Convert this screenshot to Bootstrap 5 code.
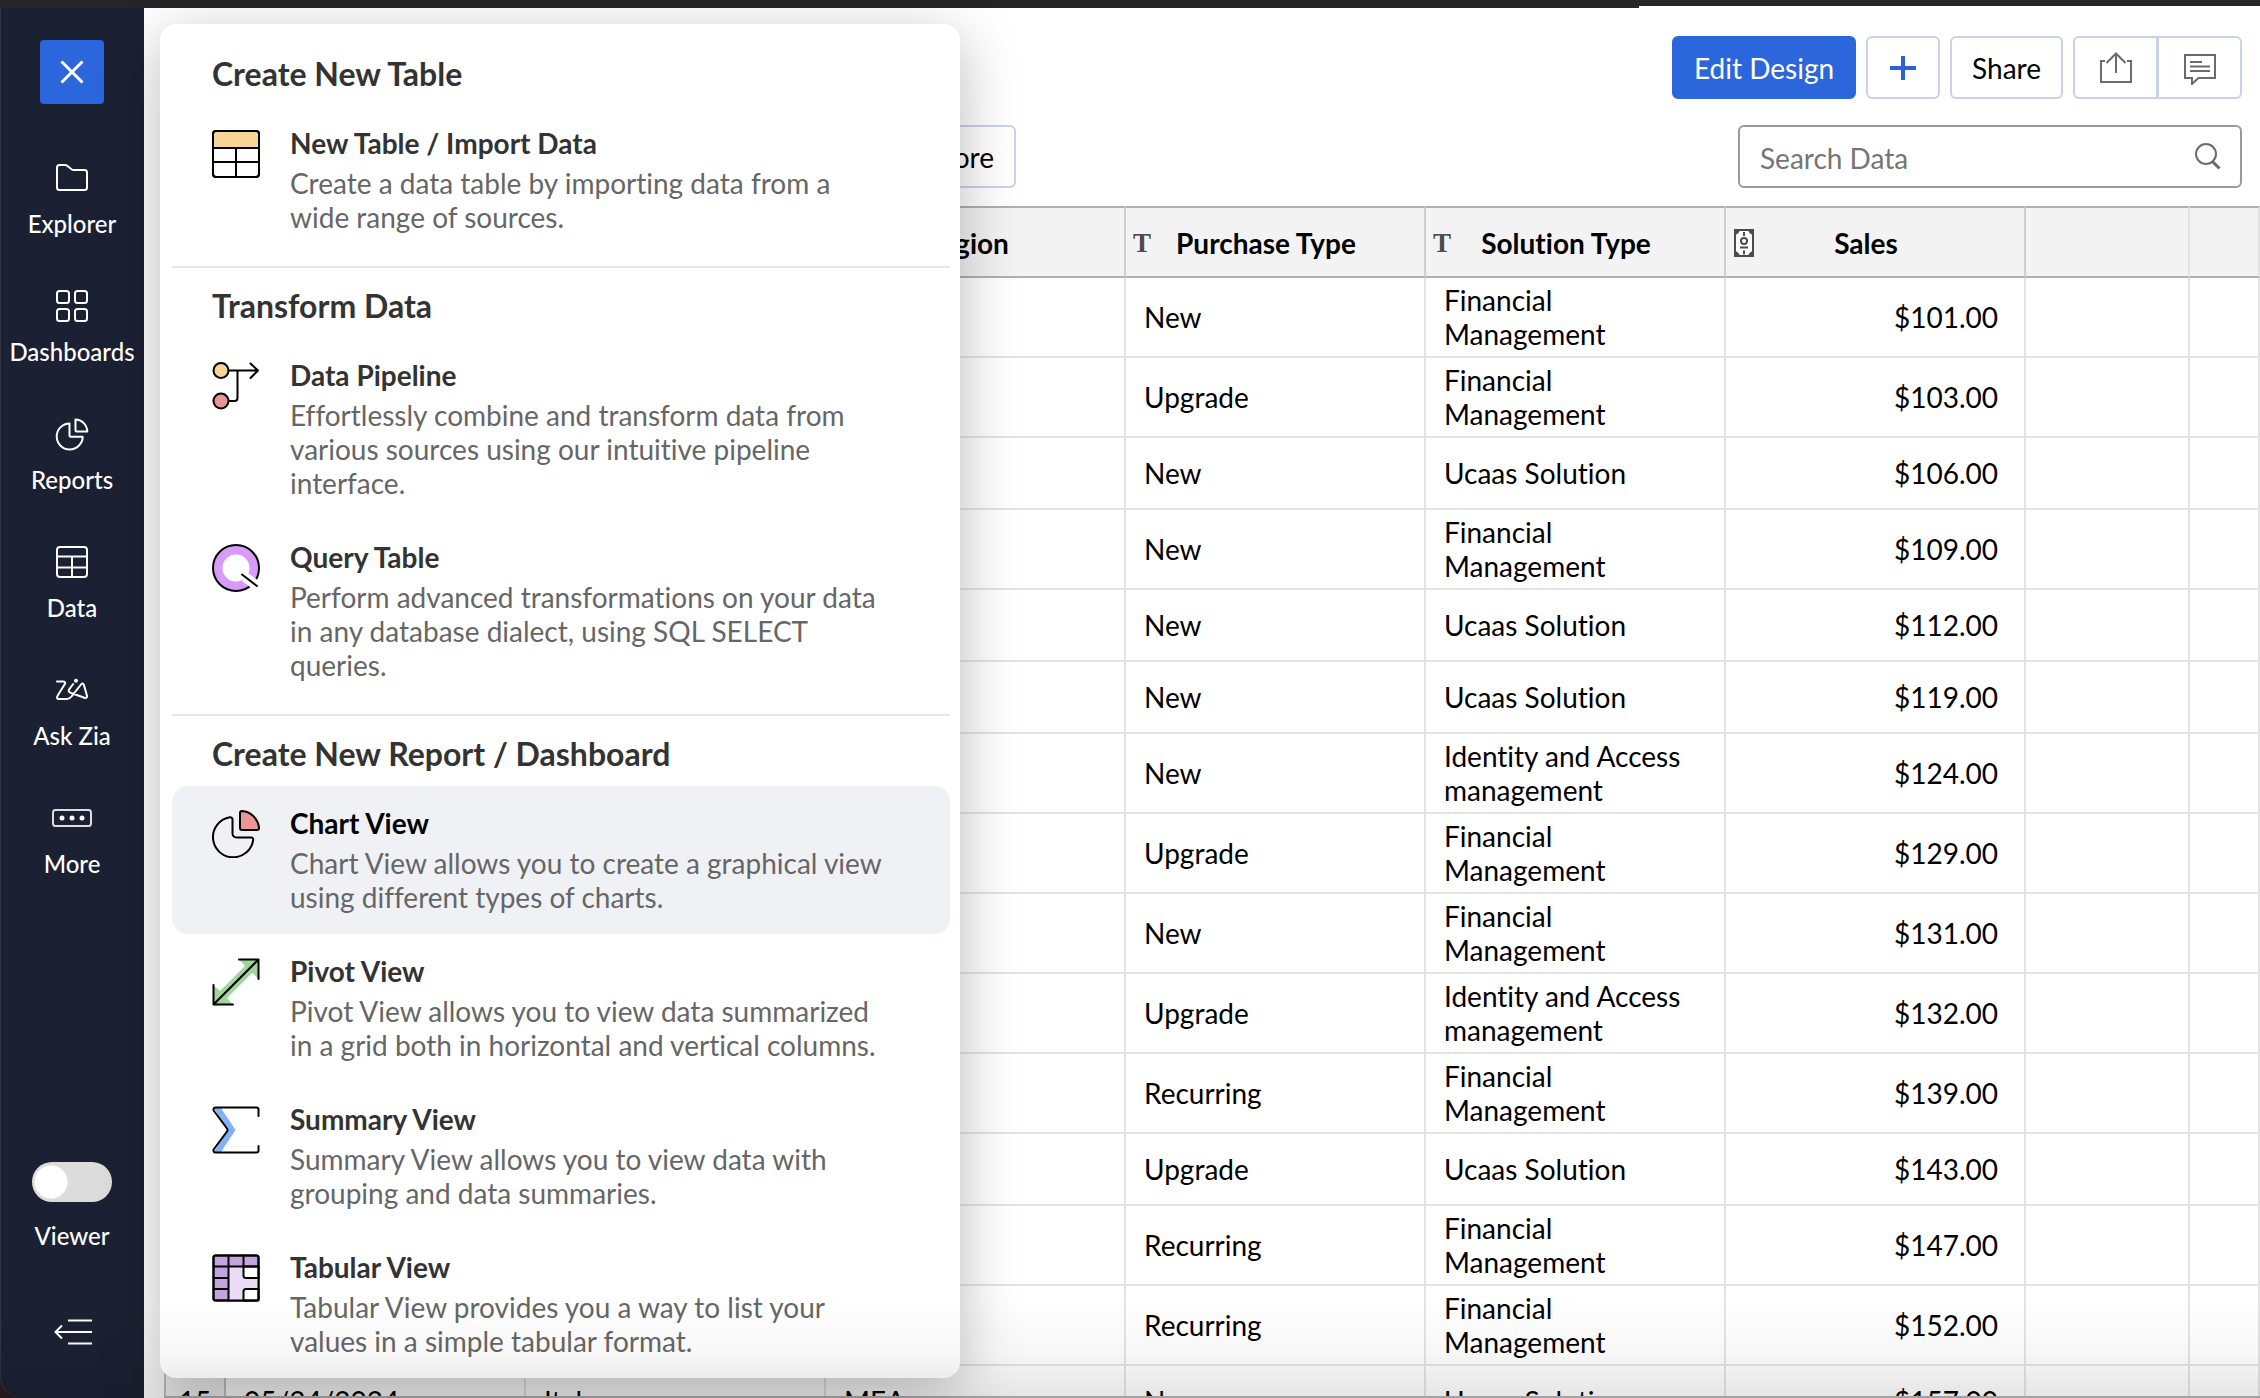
<!DOCTYPE html>
<html lang="en">
<head>
<meta charset="utf-8">
<meta name="viewport" content="width=device-width, initial-scale=1">
<title>Sales data</title>
<link href="https://cdn.jsdelivr.net/npm/bootstrap@5.3.0/dist/css/bootstrap.min.css" rel="stylesheet">
<style>
  body { font-family: Lato, "Open Sans", sans-serif; font-size: 28px; line-height: 34px; color: #000; background: #fff; font-variant-ligatures: none; }
  button { font-family: inherit; }
  svg { display: block; flex: none; }
  .window-edge { height: 8px; }
  .window-edge div { background: #262628; }
  .edge-thick { width: 72.5%; height: 8px; }
  .edge-thin { height: 6px; }

  /* left rail */
  .rail-wrap { width: 144px; background: #2a1c20; z-index: 3; }
  .rail { background: #1b2133; box-shadow: inset 1px 0 #2f3547; border-bottom-left-radius: 22px; padding: 32px 0 42px; color: #fff; }
  .rail-close { width: 64px; height: 64px; background: #2c66dd; border-radius: 4px; margin-bottom: 34px; }
  .rail-link { color: #fff; font-size: 24px; font-weight: 500; line-height: 30px; padding: 16px 0 27px; gap: 7px; text-decoration: none; }
  .rail-link svg, .line-icon { fill: none; stroke: currentColor; stroke-width: 2; stroke-linecap: round; stroke-linejoin: round; }
  .rail .form-switch { min-height: 0; gap: 19px; font-size: 24px; font-weight: 500; line-height: 30px; margin-bottom: 57px; }
  .rail .form-switch .form-check-input {
    width: 80px; height: 40px; margin: 0; border: 0; background-color: #dcdcdc; border-radius: 20px;
    background-image: radial-gradient(circle at 19px 20px, #fff 15px, #fff 16px, transparent 17px); background-size: 100% 100%;
  }

  /* toolbar */
  .toolbar { padding: 28px 18px 0; gap: 26px; }
  .tool-btn { height: 63px; border: 2px solid #c8d2ea; border-radius: 6px; background: #fff; font-size: 28px; line-height: 34px; padding: 0 20px; color: #000; }
  .tool-btn.tool-main { background: #2c66dd; border-color: #2c66dd; color: #fff; }
  .tool-btn.tool-plus { width: 74px; padding: 0; color: #2c5fd8; }
  .tool-btn.tool-icon { width: 85px; padding: 0; color: #6b6b6b; }
  .btn-group > .tool-icon + .tool-icon { margin-left: -2px; }
  .gap-tools { gap: 10px; }
  .more-slot { width: 854px; }
  .search-field { width: 504px; height: 63px; border: 2px solid #9a9a9a; border-radius: 6px; color: #6b6b6b; padding-right: 16px; }
  .search-field .form-control { font-size: 28px; line-height: 34px; padding: 2px 20px 0; color: #333; }
  .search-field .form-control::placeholder { color: #757575; }

  /* data grid */
  .grid-pane { margin: 18px 0 0 20px; border-bottom: 2px solid #b4b4b4; }
  .data-grid { table-layout: fixed; border-collapse: separate; border-spacing: 0; width: 100%; }
  .data-grid th, .data-grid td { height: 72px; border-right: 2px solid #e4e4e4; border-bottom: 2px solid #e4e4e4; padding: 5px 18px; font-weight: 400; vertical-align: middle; }
  .data-grid thead th { background: #f3f3f3; border-top: 2px solid #b0b0b0; border-bottom-color: #b0b0b0; border-right-color: #cfcfcf; font-weight: 700; padding: 2px 49px 0 7px; }
  .data-grid thead th.spare { border-right-color: #e4e4e4; }
  .data-grid .row-no { background: #f3f3f3; border-left: 2px solid #c4c4c4; border-right-color: #c4c4c4; padding: 0; text-align: center; }
  .data-grid td.money { text-align: right; padding-right: 26px; }
  .c-no { width: 62px; } .c-data { width: 300px; } .c-spare { width: 164px; }
  .type-mark { width: 24px; font-family: "Liberation Serif", serif; font-weight: 700; font-size: 27px; color: #4c4c4c; }
  .bottom-fade { position: absolute; inset: auto 0 0 0; height: 100px; z-index: 5; pointer-events: none; background: linear-gradient(rgba(0,0,0,0), rgba(0,0,0,.03) 55%, rgba(0,0,0,.1)); }

  /* create menu, floats over the grid */
  .create-menu { position: absolute; left: 160px; top: 24px; width: 800px; z-index: 4; background: #fff; border-radius: 16px; padding: 12px 10px 0 12px; box-shadow: 0 14px 60px rgba(0,0,0,.27); }
  .create-menu h2 { font-size: 32px; line-height: 40px; font-weight: 700; color: #333; margin: 0; padding: 18px 40px 12px; }
  .create-menu hr { margin: 12px 0 0; border: 0; border-top: 2px solid #e6e6e6; opacity: 1; }
  .menu-entry { padding: 20px 66px 20px 40px; gap: 30px; border-radius: 16px; color: #666; text-decoration: none; }
  .menu-entry svg { margin-top: 4px; fill: none; stroke: #000; stroke-width: 2; stroke-linejoin: round; stroke-linecap: round; }
  .menu-entry strong { display: block; color: #333; margin-bottom: 6px; }
  .menu-entry.current { background: #f0f1f5; }
  .menu-entry.current strong { color: #000; }
</style>
<script src="https://cdn.jsdelivr.net/npm/bootstrap@5.3.0/dist/js/bootstrap.bundle.min.js"></script>
</head>
<body class="vh-100 overflow-hidden d-flex flex-column position-relative">

<div class="window-edge d-flex align-items-start flex-shrink-0"><div class="edge-thick"></div><div class="edge-thin flex-fill"></div></div>

<div class="d-flex flex-fill overflow-hidden">
  <div class="rail-wrap flex-shrink-0 d-flex">
    <nav class="rail flex-fill d-flex flex-column align-items-center" aria-label="Main">
      <button class="btn rail-close p-0 d-flex align-items-center justify-content-center" type="button" aria-label="Close">
        <svg width="24" height="24" viewBox="0 0 24 24" stroke="#fff" stroke-width="3"><path d="M1.500 1.500l21 21M22.500 1.500l-21 21"/></svg>
      </button>
      <a class="rail-link d-flex flex-column align-items-center" href="#"><svg width="48" height="48" viewBox="0 0 48 48"><path d="M9 13.500a2.500 2.500 0 0 1 2.500-2.500H17c1 0 1.500.2 2.200.8l4.300 3.400c.8.6 1.500.8 2.500.8h10.500a2.500 2.500 0 0 1 2.500 2.500V33.500a2.500 2.500 0 0 1-2.500 2.500h-25A2.500 2.500 0 0 1 9 33.500z"/></svg>Explorer</a>
      <a class="rail-link d-flex flex-column align-items-center" href="#"><svg width="48" height="48" viewBox="0 0 48 48"><rect x="9" y="9" width="12" height="12" rx="2.500"/><rect x="27" y="9" width="12" height="12" rx="2.500"/><rect x="9" y="27" width="12" height="12" rx="2.500"/><rect x="27" y="27" width="12" height="12" rx="2.500"/></svg>Dashboards</a>
      <a class="rail-link d-flex flex-column align-items-center" href="#"><svg width="48" height="48" viewBox="0 0 48 48"><path d="M27.500 9.500c6 0 11.500 5 11.800 12H28.500a1 1 0 0 1-1-1zM21.500 13.500a13 13 0 1 0 13.200 13.200H23a1.500 1.500 0 0 1-1.500-1.500z"/></svg>Reports</a>
      <a class="rail-link d-flex flex-column align-items-center" href="#"><svg width="48" height="48" viewBox="0 0 48 48"><rect x="9" y="9" width="30" height="30" rx="3"/><path d="M9 18.500h30M9 29.500h30M24 18.500V39"/></svg>Data</a>
      <a class="rail-link d-flex flex-column align-items-center" href="#"><svg width="48" height="48" viewBox="0 0 48 48"><path d="M9 15.500h6c2.500 0 2.800 1.500 1.400 3.300L10 29c-1.500 2.500-1.200 4 1 4h8c2 0 3-.6 4.500-2.500L33 18.500c1.200-1.500 2.300-1.300 2.900.5l3 10.500c.6 2-.5 2.800-2.400 2.200L23 27c-2.400-.8-3-2.200-1.500-4.200l3.700-4.800"/><circle cx="28" cy="14.800" r="1"/></svg>Ask Zia</a>
      <a class="rail-link d-flex flex-column align-items-center" href="#"><svg width="48" height="48" viewBox="0 0 48 48"><rect x="5" y="16" width="38" height="16" rx="2.500" stroke-opacity=".85"/><g fill="#fff" stroke="none"><circle cx="14" cy="24" r="2.500"/><circle cx="24" cy="24" r="2.500"/><circle cx="34" cy="24" r="2.500"/></g></svg>More</a>
      <div class="form-check form-switch p-0 mt-auto d-flex flex-column align-items-center">
        <input class="form-check-input" type="checkbox" role="switch" id="viewer">
        <label for="viewer">Viewer</label>
      </div>
      <button class="btn p-0 border-0 text-white" type="button" aria-label="Collapse sidebar">
        <svg class="line-icon" width="48" height="48" viewBox="0 0 48 48"><path d="M20 12.500h24M8 24h36M20 35.500h24M14 17.500L7.500 24l6.500 6.500" stroke-linecap="butt" stroke-linejoin="miter"/></svg>
      </button>
    </nav>
  </div>

  <main class="flex-fill d-flex flex-column overflow-hidden">
    <div class="toolbar d-flex flex-column flex-shrink-0">
      <div class="d-flex justify-content-end gap-tools">
        <button class="btn tool-btn tool-main" type="button">Edit Design</button>
        <button class="btn tool-btn tool-plus d-flex align-items-center justify-content-center" type="button" aria-label="Add"><svg width="26" height="26" viewBox="0 0 26 26" stroke="currentColor" stroke-width="4"><path d="M13 1v24M0 13h26"/></svg></button>
        <button class="btn tool-btn" type="button">Share</button>
        <div class="btn-group">
          <button class="btn tool-btn tool-icon d-flex align-items-center justify-content-center" type="button" aria-label="Export"><svg width="34" height="34" viewBox="0 0 34 34" fill="none" stroke="currentColor" stroke-width="2"><path d="M6 10H2v21h30V10h-4M17 22V2.500M7.500 12L17 2.500 26.500 12"/></svg></button>
          <button class="btn tool-btn tool-icon d-flex align-items-center justify-content-center" type="button" aria-label="Comments"><svg width="34" height="34" viewBox="0 0 34 34" fill="none" stroke="currentColor" stroke-width="2"><path d="M2 4h30v23H15.500L9 33v-6H2zM7 11h12M7 15.500h20M7 20h20"/></svg></button>
        </div>
      </div>
      <div class="d-flex justify-content-between">
        <div class="more-slot d-flex justify-content-end"><button class="btn tool-btn" type="button">More</button></div>
        <div class="search-field d-flex align-items-center">
          <input class="form-control border-0 bg-transparent shadow-none" type="search" placeholder="Search Data" aria-label="Search Data">
          <svg width="32" height="32" viewBox="0 0 32 32" fill="none" stroke="currentColor" stroke-width="2"><circle cx="14" cy="13" r="10"/><path d="M20.500 20.500l7 7" stroke-width="3"/></svg>
        </div>
      </div>
    </div>

    <div class="grid-pane flex-fill overflow-hidden">
      <table class="data-grid">
        <colgroup><col class="c-no"><col class="c-data"><col class="c-data"><col class="c-data"><col class="c-data"><col class="c-data"><col class="c-data"><col class="c-spare"><col></colgroup>
        <thead><tr>
          <th class="row-no"></th><th></th><th></th>
          <th><div class="d-flex align-items-center"><span class="type-mark">T</span><span class="flex-fill text-center">Region</span></div></th>
          <th><div class="d-flex align-items-center"><span class="type-mark">T</span><span class="flex-fill text-center">Purchase Type</span></div></th>
          <th><div class="d-flex align-items-center"><span class="type-mark">T</span><span class="flex-fill text-center">Solution Type</span></div></th>
          <th><div class="d-flex align-items-center"><span class="type-mark"><svg width="22" height="30" viewBox="0 0 22 30" fill="none" stroke="#4c4c4c" stroke-width="2"><rect x="2" y="2" width="18" height="26" fill="#fff"/><path d="M1 1h6a6 6 0 0 1-6 6zM21 1v6a6 6 0 0 1-6-6zM1 29v-6a6 6 0 0 1 6 6zM21 29h-6a6 6 0 0 1 6-6z" fill="#4c4c4c" stroke="none"/><circle cx="11" cy="13" r="3"/><path d="M11 4v4M7 19.500h8M11 22.500v4"/></svg></span><span class="flex-fill text-center">Sales</span></div></th>
          <th class="spare"></th><th class="spare"></th>
        </tr></thead>
        <tbody>
          <tr><th class="row-no">1</th><td></td><td></td><td></td><td>New</td><td>Financial Management</td><td class="money">$101.00</td><td></td><td></td></tr>
          <tr><th class="row-no">2</th><td></td><td></td><td></td><td>Upgrade</td><td>Financial Management</td><td class="money">$103.00</td><td></td><td></td></tr>
          <tr><th class="row-no">3</th><td></td><td></td><td></td><td>New</td><td>Ucaas Solution</td><td class="money">$106.00</td><td></td><td></td></tr>
          <tr><th class="row-no">4</th><td></td><td></td><td></td><td>New</td><td>Financial Management</td><td class="money">$109.00</td><td></td><td></td></tr>
          <tr><th class="row-no">5</th><td></td><td></td><td></td><td>New</td><td>Ucaas Solution</td><td class="money">$112.00</td><td></td><td></td></tr>
          <tr><th class="row-no">6</th><td></td><td></td><td></td><td>New</td><td>Ucaas Solution</td><td class="money">$119.00</td><td></td><td></td></tr>
          <tr><th class="row-no">7</th><td></td><td></td><td></td><td>New</td><td>Identity and Access management</td><td class="money">$124.00</td><td></td><td></td></tr>
          <tr><th class="row-no">8</th><td></td><td></td><td></td><td>Upgrade</td><td>Financial Management</td><td class="money">$129.00</td><td></td><td></td></tr>
          <tr><th class="row-no">9</th><td></td><td></td><td></td><td>New</td><td>Financial Management</td><td class="money">$131.00</td><td></td><td></td></tr>
          <tr><th class="row-no">10</th><td></td><td></td><td></td><td>Upgrade</td><td>Identity and Access management</td><td class="money">$132.00</td><td></td><td></td></tr>
          <tr><th class="row-no">11</th><td></td><td></td><td></td><td>Recurring</td><td>Financial Management</td><td class="money">$139.00</td><td></td><td></td></tr>
          <tr><th class="row-no">12</th><td></td><td></td><td></td><td>Upgrade</td><td>Ucaas Solution</td><td class="money">$143.00</td><td></td><td></td></tr>
          <tr><th class="row-no">13</th><td></td><td></td><td></td><td>Recurring</td><td>Financial Management</td><td class="money">$147.00</td><td></td><td></td></tr>
          <tr><th class="row-no">14</th><td></td><td></td><td></td><td>Recurring</td><td>Financial Management</td><td class="money">$152.00</td><td></td><td></td></tr>
          <tr><th class="row-no">15</th><td>05/24/2024</td><td>Italy</td><td>MEA</td><td>New</td><td>Ucaas Solution</td><td class="money">$157.00</td><td></td><td></td></tr>
        </tbody>
      </table>
    </div>
  </main>
</div>

<section class="create-menu" aria-label="Create">
  <h2>Create New Table</h2>
  <a class="menu-entry d-flex align-items-start" href="#">
    <svg width="48" height="48" viewBox="0 0 48 48"><rect x="1" y="1" width="46" height="46" rx="3" fill="#fff"/><path d="M2 18V4a2 2 0 0 1 2-2h40a2 2 0 0 1 2 2v14z" fill="#f9d497" stroke="none"/><rect x="1" y="1" width="46" height="46" rx="3"/><path d="M1 18h46M1 32h46M24 18v29"/></svg>
    <span><strong>New Table / Import Data</strong>Create a data table by importing data from a wide range of sources.</span>
  </a>
  <hr>
  <h2>Transform Data</h2>
  <a class="menu-entry d-flex align-items-start" href="#">
    <svg width="48" height="48" viewBox="0 0 48 48"><path d="M16 8.500h29M38.500 1.500L46 8.500l-7.500 7.500M25.500 8.500V36a3 3 0 0 1-3 3H16"/><circle cx="9" cy="8.500" r="7.500" fill="#f9d497"/><circle cx="9" cy="39" r="7.500" fill="#ec9595"/></svg>
    <span><strong>Data Pipeline</strong>Effortlessly combine and transform data from various sources using our intuitive pipeline interface.</span>
  </a>
  <a class="menu-entry d-flex align-items-start" href="#">
    <svg width="48" height="48" viewBox="0 0 48 48"><circle cx="24" cy="24" r="18" stroke="#d99bfa" stroke-width="9"/><circle cx="24" cy="24" r="23"/><path d="M33 33l15 11" stroke="#fff" stroke-width="10" stroke-linecap="butt"/><path d="M30 30.500L45 42"/></svg>
    <span><strong>Query Table</strong>Perform advanced transformations on your data in any database dialect, using SQL SELECT queries.</span>
  </a>
  <hr>
  <h2>Create New Report / Dashboard</h2>
  <a class="menu-entry current d-flex align-items-start" href="#">
    <svg width="48" height="48" viewBox="0 0 48 48"><path d="M28 3a2 2 0 0 1 2-2c9 .5 16 8 17 16.500a2 2 0 0 1-2 2.500H30a2 2 0 0 1-2-2z" fill="#ec9595"/><path d="M20.500 9.500a2.300 2.300 0 0 0-2.600-2.300 20.200 20.200 0 1 0 23.300 22.600 2 2 0 0 0-2-2.300H24.500a4 4 0 0 1-4-4z"/></svg>
    <span><strong>Chart View</strong>Chart View allows you to create a graphical view using different types of charts.</span>
  </a>
  <a class="menu-entry d-flex align-items-start" href="#">
    <svg width="48" height="48" viewBox="0 0 48 48"><path d="M28 2h18v18l-6-5-25 25 5 6H2V28l6 5L33 8z" fill="#9fd49b" stroke="none"/><path d="M27 1.500h19.500V21M1.500 27v19.500H21M1.500 46.500l45-45"/></svg>
    <span><strong>Pivot View</strong>Pivot View allows you to view data summarized in a grid both in horizontal and vertical columns.</span>
  </a>
  <a class="menu-entry d-flex align-items-start" href="#">
    <svg width="48" height="48" viewBox="0 0 48 48"><path d="M2 2h7l14.500 22L9 46H2l13.500-22z" fill="#82b1f9" stroke="none"/><path d="M46.500 10V3.500a2 2 0 0 0-2-2H3.500C1.500 1.500 1 3.500 2 5l13 17.500a2.500 2.500 0 0 1 0 3L2 43c-1 1.500-.5 3.500 1.500 3.500h41a2 2 0 0 0 2-2V40"/></svg>
    <span><strong>Summary View</strong>Summary View allows you to view data with grouping and data summaries.</span>
  </a>
  <a class="menu-entry d-flex align-items-start" href="#">
    <svg width="48" height="48" viewBox="0 0 48 48"><rect x="1.500" y="1.500" width="45" height="45" rx="2" fill="#c4a3df"/><path d="M16.500 12.500h30v34h-30z" fill="#e9dcf4" stroke="none"/><path d="M31.500 12.500h15V24H34a2.500 2.500 0 0 1-2.500-2.500zM31.500 46.500h15V35H34a2.500 2.500 0 0 0-2.500 2.500z" fill="#fff"/><path d="M1.500 12.500h45M1.500 24h15M1.500 35h15M16.500 1.500v45M31.500 1.500v11"/><rect x="1.500" y="1.500" width="45" height="45" rx="2"/></svg>
    <span><strong>Tabular View</strong>Tabular View provides you a way to list your values in a simple tabular format.</span>
  </a>
</section>
<div class="bottom-fade"></div>
</body>
</html>
